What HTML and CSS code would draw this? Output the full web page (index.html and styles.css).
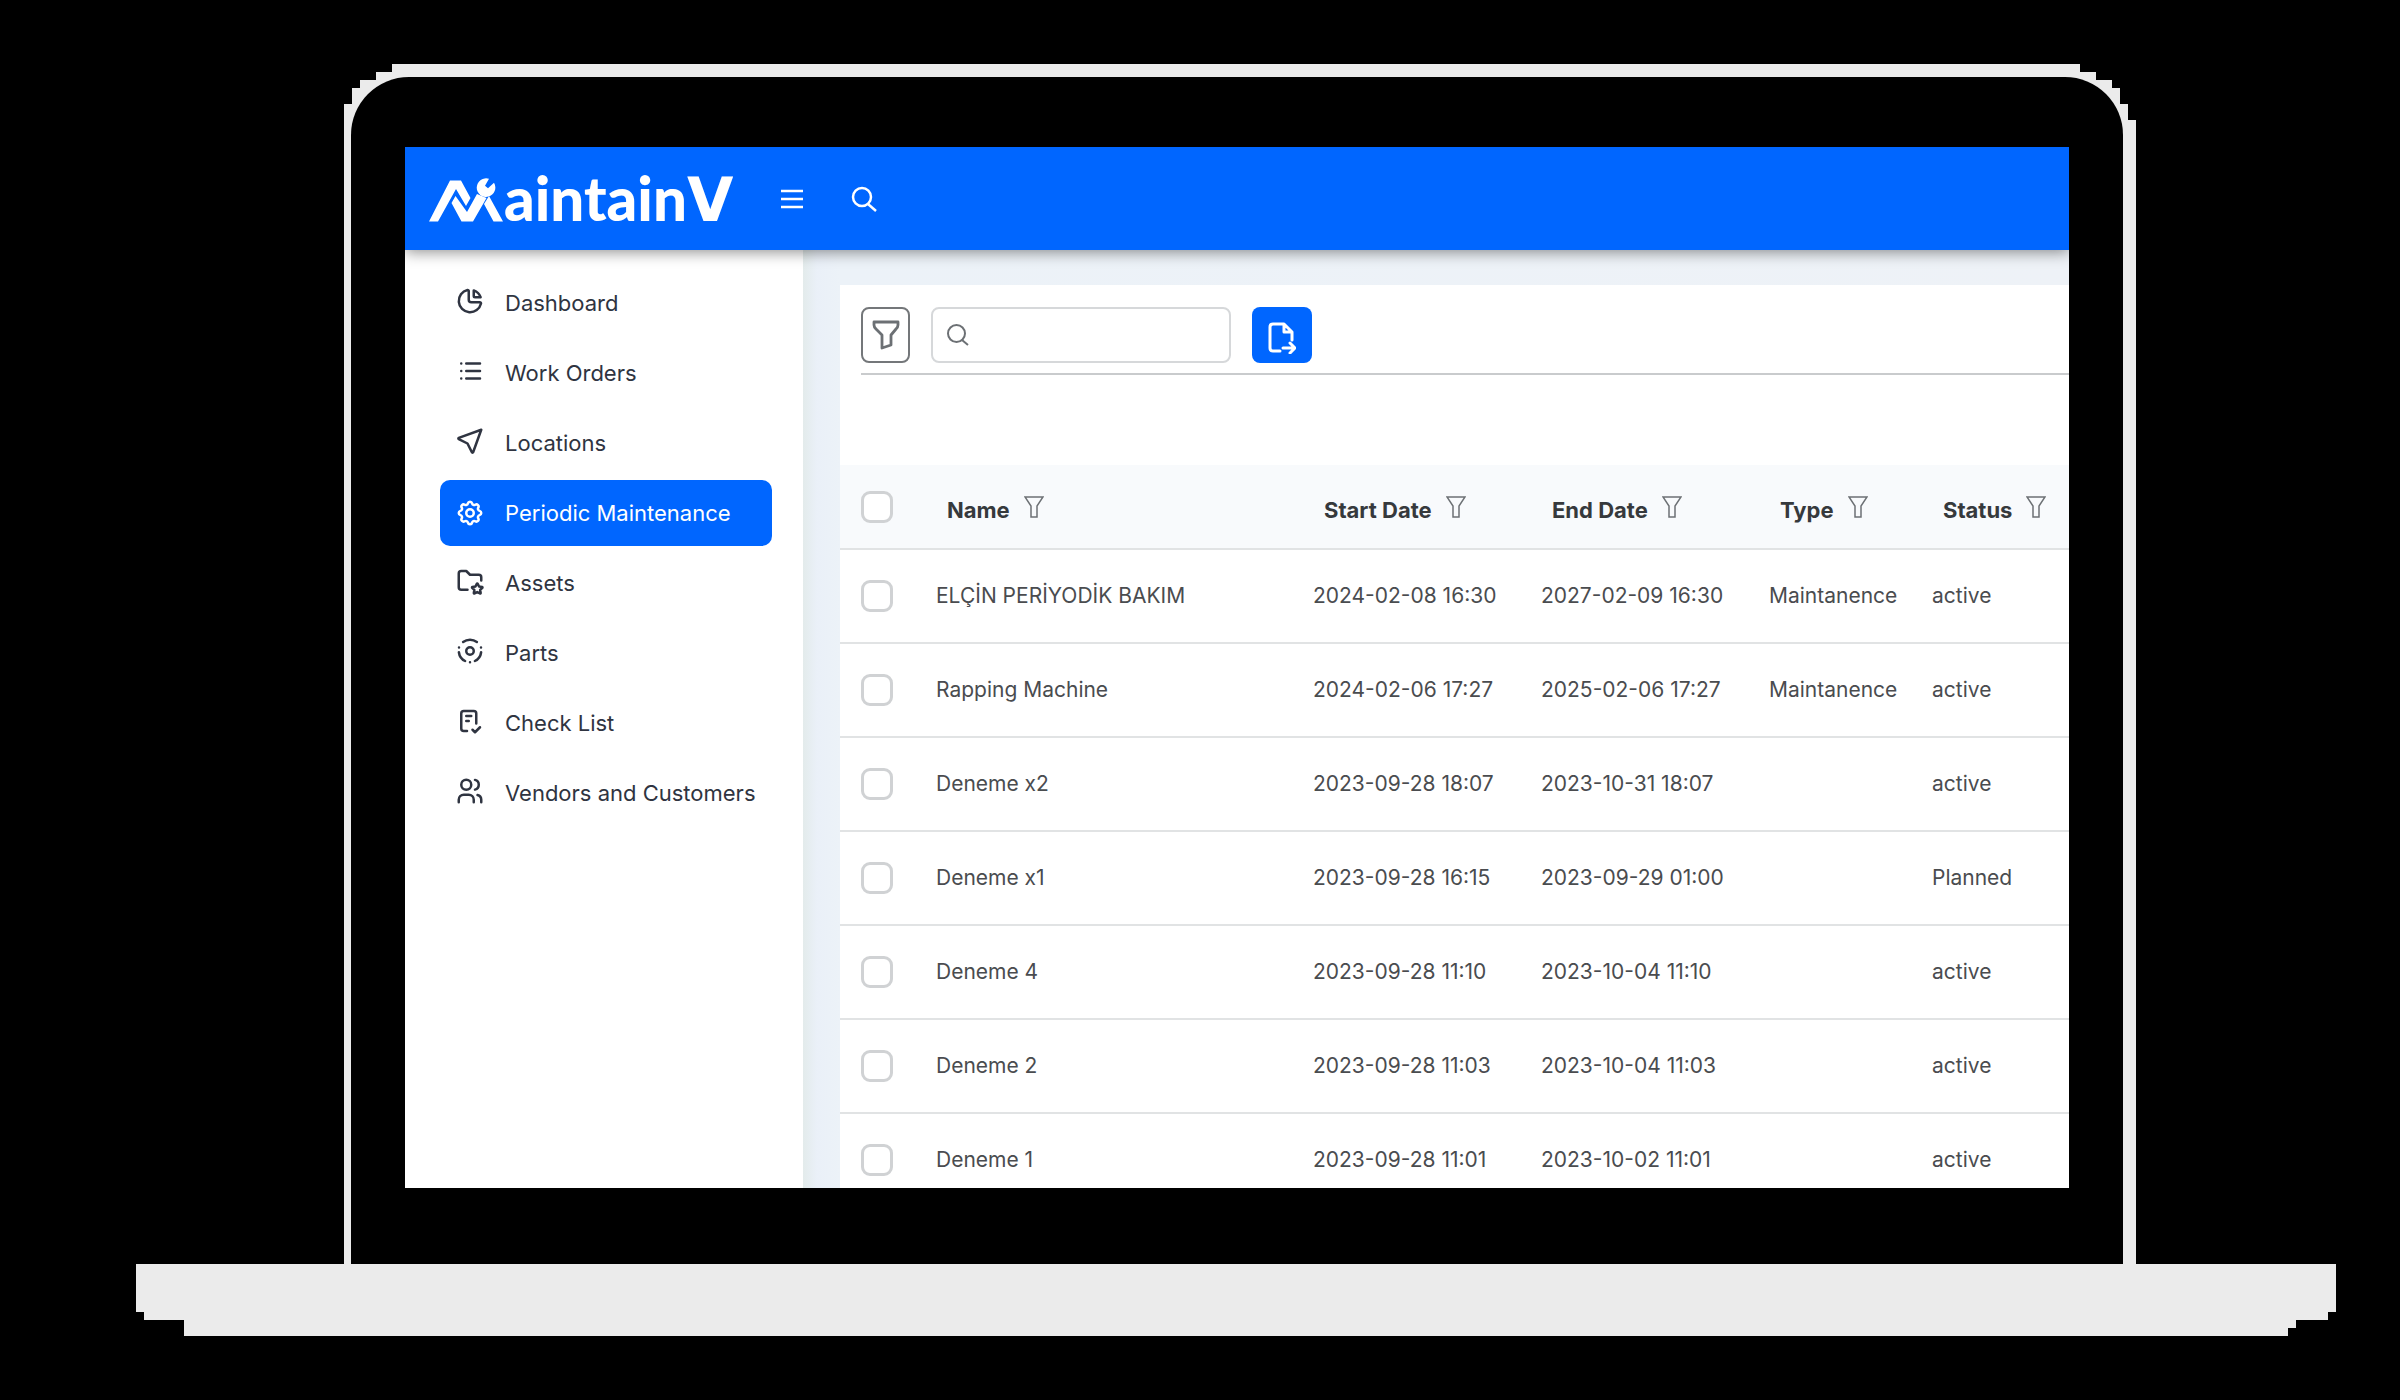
FILE: index.html
```html
<!DOCTYPE html>
<html lang="en">
<head>
<meta charset="utf-8">
<meta name="viewport" content="width=device-width, initial-scale=1">
<title>MaintainV – Periodic Maintenance</title>
<link rel="stylesheet" href="styles.css">
</head>
<body>
<svg class="sprite" aria-hidden="true">
  <symbol id="funnel" viewBox="0 0 20 22"><path d="M1 1h18l-6 9v11H7V10z" fill="none" stroke="currentColor" stroke-width="1.500"/></symbol>
</svg>
<div class="laptop">
  <div class="lid">
    <div class="bezel">
      <div class="screen">
        <header class="topbar">
          <a class="logo" href="#">
            <svg class="logo-mark" viewBox="0 0 75 44" aria-hidden="true">
              <path d="M0 43.500 21 2.500h11L41.500 20l-4.500 8-10-17L9 43.500zM26.500 18 38 34l10-18 9.500 4L44 43.500H32.500L22.500 25zM55 26l5-8 14 25.500h-9.500z" fill="#fff"/>
              <path d="M60 .8l-4 7 3 2.500 6-5.500a9.300 9.300 0 1 1-5-4z" fill="#fff"/>
            </svg>
            <span class="logo-text">aintain<b class="logo-v">V</b></span>
          </a>
          <button class="icon-button" type="button" aria-label="Menu">
            <svg width="22" height="20" viewBox="0 0 22 20"><path d="M0 2h22M0 10h22M0 18h22" stroke="#fff" stroke-width="2.600"/></svg>
          </button>
          <button class="icon-button" type="button" aria-label="Search">
            <svg width="26" height="26" viewBox="0 0 26 26" fill="none" stroke="#fff" stroke-width="2.500"><circle cx="11" cy="11" r="9"/><path d="m17 18 8 7"/></svg>
          </button>
        </header>
        <div class="body">
          <nav class="sidebar">
            <a class="nav-item" href="#"><svg class="nav-icon" viewBox="0 0 24 24"><path d="M10 3.200A9 9 0 1 0 20.800 14a1 1 0 0 0-1-1H13a2 2 0 0 1-2-2V4a.9.9 0 0 0-1-.8"/><path d="M15 3.500A9 9 0 0 1 20.500 9H16a1 1 0 0 1-1-1z"/></svg>Dashboard</a>
            <a class="nav-item" href="#"><svg class="nav-icon" viewBox="0 0 24 24"><path d="M9 6h11M9 12h11M9 18h11M5 6v.01M5 12v.01M5 18v.01"/></svg>Work Orders</a>
            <a class="nav-item" href="#"><svg class="nav-icon" viewBox="0 0 24 24"><path d="M21 3 14.500 21a.55.55 0 0 1-1 0L10 14l-7-3.500a.55.55 0 0 1 0-1z"/></svg>Locations</a>
            <a class="nav-item nav-item-active" href="#" aria-current="page"><svg class="nav-icon" viewBox="0 0 24 24"><path d="M10.325 4.317c.426-1.756 2.924-1.756 3.350 0a1.724 1.724 0 0 0 2.573 1.066c1.543-.94 3.310.826 2.370 2.370a1.724 1.724 0 0 0 1.065 2.572c1.756.426 1.756 2.924 0 3.350a1.724 1.724 0 0 0-1.066 2.573c.94 1.543-.826 3.310-2.370 2.370a1.724 1.724 0 0 0-2.572 1.065c-.426 1.756-2.924 1.756-3.350 0a1.724 1.724 0 0 0-2.573-1.066c-1.543.94-3.310-.826-2.370-2.370a1.724 1.724 0 0 0-1.065-2.572c-1.756-.426-1.756-2.924 0-3.350a1.724 1.724 0 0 0 1.066-2.573c-.94-1.543.826-3.310 2.370-2.370 1 .608 2.296.07 2.572-1.065z"/><circle cx="12" cy="12" r="3"/></svg>Periodic Maintenance</a>
            <a class="nav-item" href="#"><svg class="nav-icon" viewBox="0 0 24 24"><path d="M10 19H5a2 2 0 0 1-2-2V6a2 2 0 0 1 2-2h4l3 3h7a2 2 0 0 1 2 2v2.500"/><path d="m17.800 20.817-2.172 1.138a.392.392 0 0 1-.568-.410l.415-2.411-1.757-1.707a.389.389 0 0 1 .217-.665l2.428-.352 1.086-2.193a.392.392 0 0 1 .702 0l1.086 2.193 2.428.352a.390.390 0 0 1 .217.665l-1.757 1.707.414 2.410a.390.390 0 0 1-.567.411z"/></svg>Assets</a>
            <a class="nav-item" href="#"><svg class="nav-icon" viewBox="0 0 24 24"><path d="M12 21v.01M3.200 9.200v.01M20.800 9.200v.01M6.500 4.800a9 9 0 0 1 11 0M3.100 13a9 9 0 0 0 5 7M20.900 13a9 9 0 0 1-5 7"/><circle cx="12" cy="12" r="3"/></svg>Parts</a>
            <a class="nav-item" href="#"><svg class="nav-icon" viewBox="0 0 24 24"><path d="M9.615 20H7a2 2 0 0 1-2-2V6a2 2 0 0 1 2-2h8a2 2 0 0 1 2 2v8M14 19l2 2 4-4M9 8h4M9 12h2"/></svg>Check List</a>
            <a class="nav-item" href="#"><svg class="nav-icon" viewBox="0 0 24 24"><circle cx="9" cy="7" r="4"/><path d="M3 21v-2a4 4 0 0 1 4-4h4a4 4 0 0 1 4 4v2M16 3.130a4 4 0 0 1 0 7.750M21 21v-2a4 4 0 0 0-3-3.850"/></svg>Vendors and Customers</a>
          </nav>
          <main class="content">
            <section class="panel">
              <div class="toolbar">
                <button class="filter-button" type="button" aria-label="Filter">
                  <svg width="28" height="30" viewBox="0 0 28 30"><path d="M2 2h24v3q0 2-2 4l-5 6v10l-9 3V15L4 9Q2 7 2 5z" fill="none" stroke="#6c7074" stroke-width="2.800" stroke-linejoin="round"/></svg>
                </button>
                <label class="search">
                  <svg width="22" height="22" viewBox="0 0 22 22" fill="none" stroke="#6c7074" stroke-width="2"><circle cx="9.500" cy="9.500" r="8.500"/><path d="m15 16 6 5"/></svg>
                  <input class="search-input" type="search" aria-label="Search maintenance">
                </label>
                <button class="export-button" type="button" aria-label="Export">
                  <svg width="28" height="32" viewBox="0 0 28 32" fill="none" stroke="#fff" stroke-width="3" stroke-linejoin="round" stroke-linecap="round"><path d="M12 29H5q-3 0-3-3V5q0-3 3-3h11l8 8v8M16 2v8h8M15 26h11M22 21l5 5-5 5"/></svg>
                </button>
              </div>
              <table class="grid">
                <thead>
                  <tr>
                    <th class="col-check"><input class="tick" type="checkbox" aria-label="Select all"></th>
                    <th class="col-name">Name<svg class="funnel"><use href="#funnel"/></svg></th>
                    <th class="col-date">Start Date<svg class="funnel"><use href="#funnel"/></svg></th>
                    <th class="col-date">End Date<svg class="funnel"><use href="#funnel"/></svg></th>
                    <th class="col-type">Type<svg class="funnel"><use href="#funnel"/></svg></th>
                    <th class="col-status">Status<svg class="funnel"><use href="#funnel"/></svg></th>
                  </tr>
                </thead>
                <tbody>
                  <tr><td><input class="tick" type="checkbox" aria-label="Select ELÇİN PERİYODİK BAKIM"></td><td>ELÇİN PERİYODİK BAKIM</td><td>2024-02-08 16:30</td><td>2027-02-09 16:30</td><td>Maintanence</td><td>active</td></tr>
                  <tr><td><input class="tick" type="checkbox" aria-label="Select Rapping Machine"></td><td>Rapping Machine</td><td>2024-02-06 17:27</td><td>2025-02-06 17:27</td><td>Maintanence</td><td>active</td></tr>
                  <tr><td><input class="tick" type="checkbox" aria-label="Select Deneme x2"></td><td>Deneme x2</td><td>2023-09-28 18:07</td><td>2023-10-31 18:07</td><td></td><td>active</td></tr>
                  <tr><td><input class="tick" type="checkbox" aria-label="Select Deneme x1"></td><td>Deneme x1</td><td>2023-09-28 16:15</td><td>2023-09-29 01:00</td><td></td><td>Planned</td></tr>
                  <tr><td><input class="tick" type="checkbox" aria-label="Select Deneme 4"></td><td>Deneme 4</td><td>2023-09-28 11:10</td><td>2023-10-04 11:10</td><td></td><td>active</td></tr>
                  <tr><td><input class="tick" type="checkbox" aria-label="Select Deneme 2"></td><td>Deneme 2</td><td>2023-09-28 11:03</td><td>2023-10-04 11:03</td><td></td><td>active</td></tr>
                  <tr><td><input class="tick" type="checkbox" aria-label="Select Deneme 1"></td><td>Deneme 1</td><td>2023-09-28 11:01</td><td>2023-10-02 11:01</td><td></td><td>active</td></tr>
                </tbody>
              </table>
            </section>
          </main>
        </div>
      </div>
    </div>
  </div>
  <div class="base"></div>
</div>
</body>
</html>
```
FILE: styles.css
```css
* { box-sizing: border-box; }

body {
  margin: 0;
  background: #000;
  font-family: Inter, "Liberation Sans", sans-serif;
  font-size: 22px;
  line-height: 28px;
  color: #4a4c4f;
}

.sprite { display: none; }

button { padding: 0; border: 0; background: none; cursor: pointer; }

/* Laptop */
.laptop { padding: 64px 64px 64px 136px; }

.lid {
  position: relative;
  margin: 0 200px -2px 208px;
  padding: 13px 13px 0 7px;
  background: #ebebeb;
  clip-path: polygon(
    0 40px, 8px 40px, 8px 24px, 16px 24px, 16px 16px, 32px 16px, 32px 8px, 48px 8px, 48px 0,
    calc(100% - 56px) 0, calc(100% - 56px) 8px, calc(100% - 40px) 8px, calc(100% - 40px) 16px,
    calc(100% - 24px) 16px, calc(100% - 24px) 24px, calc(100% - 16px) 24px, calc(100% - 16px) 40px,
    calc(100% - 8px) 40px, calc(100% - 8px) 56px, 100% 56px, 100% 100%, 0 100%);
}

.bezel {
  padding: 70px 54px 78px;
  background: #000;
  border-radius: 58px 58px 0 0;
}

.base {
  height: 72px;
  background: #ebebeb;
  clip-path: polygon(
    0 0, 100% 0, 100% 48px, calc(100% - 8px) 48px, calc(100% - 8px) 56px,
    calc(100% - 40px) 56px, calc(100% - 40px) 64px, calc(100% - 48px) 64px, calc(100% - 48px) 100%,
    48px 100%, 48px 56px, 8px 56px, 8px 48px, 0 48px);
}

.screen {
  display: flex;
  flex-direction: column;
  aspect-ratio: 1664 / 1041;
  overflow: hidden;
  background: #fff;
}

/* Top bar */
.topbar {
  position: relative;
  z-index: 1;
  flex: none;
  display: flex;
  align-items: center;
  gap: 48px;
  height: 103px;
  padding-left: 24px;
  background: #06f;
  box-shadow: 0 2px 14px rgba(0, 0, 0, .45);
}

.logo { display: flex; align-items: flex-end; color: #fff; text-decoration: none; }
.logo-mark { width: 75px; height: 44px; }
.logo-text { font: 900 60px/44px Lato, sans-serif; }
.logo-v { font-family: "DejaVu Sans", sans-serif; font-weight: 700; }
.icon-button { display: flex; }

/* Side navigation */
.body { flex: 1; display: flex; min-height: 0; }

.sidebar {
  flex: none;
  display: flex;
  flex-direction: column;
  gap: 4px;
  width: 398px;
  padding: 20px 31px 0 35px;
}

.nav-item {
  display: flex;
  align-items: center;
  gap: 20px;
  height: 66px;
  padding-left: 15px;
  border-radius: 10px;
  color: #2f3441;
  text-decoration: none;
}

.nav-icon {
  width: 30px;
  height: 30px;
  margin-bottom: 4px;
  fill: none;
  stroke: currentColor;
  stroke-width: 2;
  stroke-linecap: round;
  stroke-linejoin: round;
}

.nav-item-active { background: #06f; color: #fff; }
.nav-item-active .nav-icon { margin-bottom: 0; }

/* Content */
.content {
  flex: 1;
  min-width: 0;
  padding: 35px 0 0 37px;
  background: linear-gradient(90deg, #e3ebeb, #eaf0f8 14px, #ecf2f8 37px, #eef2f7);
}

.panel { height: 100%; background: #fff; overflow: hidden; }

.toolbar {
  display: flex;
  gap: 21px;
  margin-left: 21px;
  padding: 22px 0 10px;
  border-bottom: 2px solid #c9cbcd;
}

.filter-button,
.export-button { display: flex; align-items: center; justify-content: center; height: 56px; border-radius: 8px; }
.filter-button { width: 49px; border: 2px solid #74777a; }
.export-button { width: 60px; padding-top: 6px; background: #06f; }

.search {
  display: flex;
  align-items: center;
  gap: 12px;
  width: 300px;
  height: 56px;
  padding: 0 14px;
  border: 2px solid #d6d8da;
  border-radius: 8px;
}

.search-input { flex: 1; min-width: 0; border: 0; outline: 0; background: none; font: inherit; }

.grid {
  width: 100%;
  margin-top: 90px;
  border-collapse: separate;
  border-spacing: 0;
  table-layout: fixed;
  white-space: nowrap;
}

.grid th,
.grid td { padding: 0; border-bottom: 2px solid #e1e3e4; text-align: left; }
.grid th { height: 85px; padding: 6px 0 0 11px; background: #f8fafc; color: #36393c; font-weight: 700; }
.grid td { height: 94px; font-size: 21px; }
.grid th:first-child,
.grid td:first-child { padding: 0 0 0 21px; }
.col-check { width: 96px; }
.col-name { width: 377px; }
.col-date { width: 228px; }
.col-type { width: 163px; }

.funnel { width: 20px; height: 22px; margin-left: 14px; color: #6c7074; }

.tick {
  display: block;
  appearance: none;
  width: 32px;
  height: 32px;
  margin: 0;
  border: 3px solid #d0d2d4;
  border-radius: 9px;
  background: #fff;
}
.tick:checked { background: #06f; border-color: #06f; }
```
